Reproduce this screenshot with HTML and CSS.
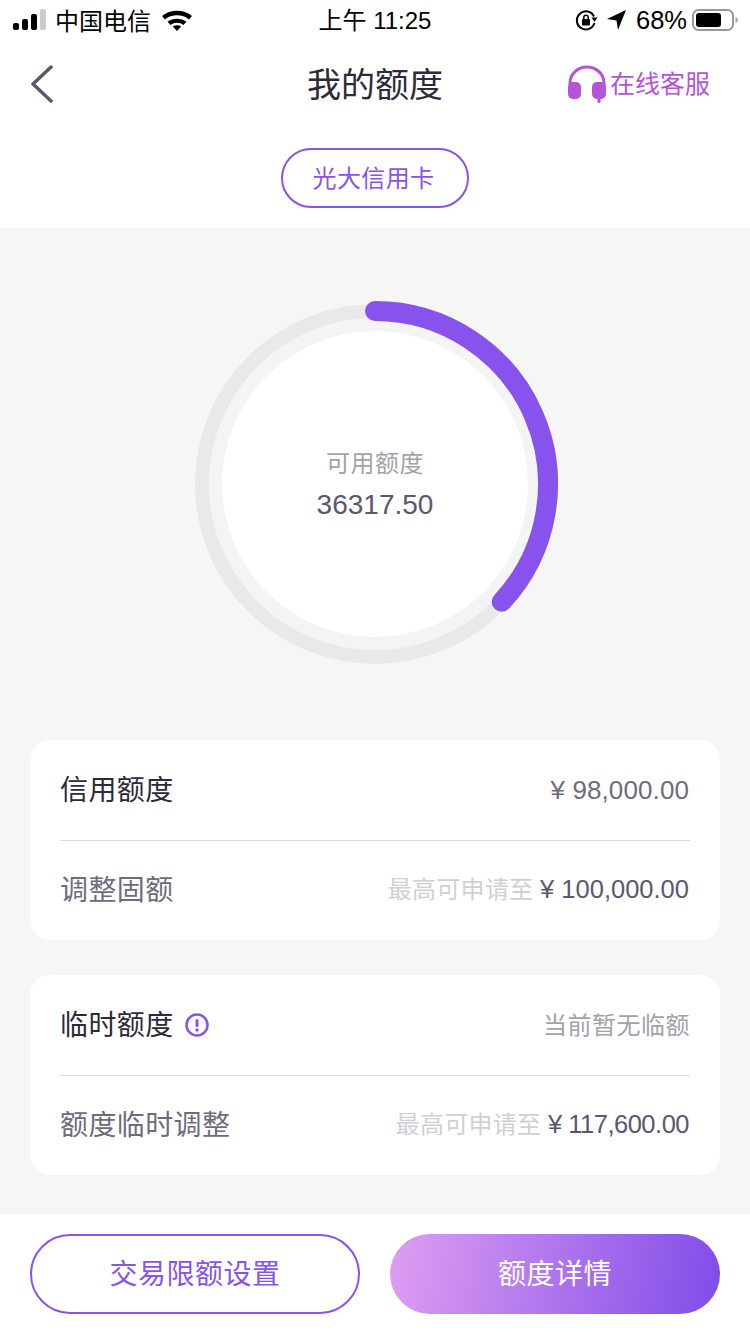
FILE: index.html
```html
<!DOCTYPE html>
<html lang="zh">
<head>
    <meta charset="UTF-8">
    <title>我的额度</title>
    <link rel="stylesheet" href="styles.css">
</head>
<body>
    <div class="top">
        <!-- 状态栏 -->
        <div class="status">
            <div class="status-left">
                <svg class="signal" width="34" height="22" viewBox="0 0 34 22">
                    <rect x="0" y="14" width="6" height="7" rx="2" fill="#000"/>
                    <rect x="9" y="10" width="6" height="11" rx="2" fill="#000"/>
                    <rect x="18" y="5" width="6" height="16" rx="2" fill="#000"/>
                    <rect x="27" y="0" width="6" height="21" rx="2" fill="#ccc"/>
                </svg>
                <span class="carrier">中国电信</span>
                <svg class="wifi" width="30" height="22" viewBox="0 0 30 22">
                    <path d="M0 7C8 0 22 0 30 7L27 10.400C20.500 4.800 9.500 4.800 3 10.400Z" fill="#000"/>
                    <path d="M5.500 12.800C11 8.600 19 8.600 24.500 12.800L21.500 16C17.500 13 12.500 13 8.500 16Z" fill="#000"/>
                    <path d="M10.800 17.500C13.200 15.800 16.800 15.800 19.200 17.500L15 22Z" fill="#000"/>
                </svg>
            </div>
            <div class="status-time">上午 11:25</div>
            <div class="status-right">
                <svg class="lock" width="24" height="24" viewBox="0 0 24 24">
                    <path d="M20 8.500A9 9 0 1 0 20.500 15" fill="none" stroke="#000" stroke-width="2"/>
                    <path d="M17.500 9.500L23.500 9.500L20.500 14Z" fill="#000"/>
                    <rect x="8" y="11" width="8" height="6.500" rx="1" fill="#000"/>
                    <path d="M9.800 11V9.500a2.200 2.200 0 0 1 4.400 0V11" fill="none" stroke="#000" stroke-width="1.500"/>
                </svg>
                <svg class="arrow" width="20" height="22" viewBox="0 0 20 22">
                    <path d="M19 1L11 21L9.500 11.500L0 10Z" fill="#000"/>
                </svg>
                <span class="battery-text">68%</span>
                <svg class="battery" width="47" height="24" viewBox="0 0 47 24">
                    <rect x="1" y="2" width="40" height="20" rx="5.500" fill="none" stroke="#999" stroke-width="2"/>
                    <rect x="4" y="5" width="25" height="14" rx="3" fill="#000"/>
                    <path d="M43.500 9v6c1.500-.5 2.500-1.500 2.500-3s-1-2.500-2.500-3Z" fill="#aaa"/>
                </svg>
            </div>
        </div>

        <!-- 导航 -->
        <div class="nav">
            <svg class="back" width="24" height="38" viewBox="0 0 24 38">
                <path d="M21 2L3 19L21 36" fill="none" stroke="#5d5670" stroke-width="3.500" stroke-linecap="round" stroke-linejoin="round"/>
            </svg>
            <h1 class="nav-title">我的额度</h1>
            <div class="service">
                <svg width="40" height="38" viewBox="0 0 40 38">
                    <path d="M3 20V18a17 16 0 0 1 34 0V20" fill="none" stroke="#b454d8" stroke-width="3"/>
                    <rect x="1" y="17" width="13" height="17" rx="5" fill="#b454d8"/>
                    <rect x="25" y="17" width="14" height="17" rx="5" fill="#b454d8"/>
                    <rect x="30.500" y="32" width="3" height="6" rx="1.500" fill="#b454d8"/>
                </svg>
                <span class="service-text">在线客服</span>
            </div>
        </div>

        <div class="pill-row">
            <div class="pill">光大信用卡</div>
        </div>
    </div>

    <div class="main">
        <!-- 额度圆环 -->
        <div class="gauge">
            <svg class="gauge-ring" width="370" height="370" viewBox="0 0 370 370">
                <circle cx="185" cy="185" r="173" fill="none" stroke="#e9e9e9" stroke-width="14"/>
                <circle cx="185" cy="185" r="166" fill="#f4f4f4"/>
                <circle cx="185" cy="185" r="153" fill="#fff"/>
                <path d="M185 12A173 173 0 0 1 311.700 302.800" fill="none" stroke="#8853ec" stroke-width="20" stroke-linecap="round"/>
            </svg>
            <div class="gauge-text">
                <div class="gauge-label">可用额度</div>
                <div class="gauge-value">36317.50</div>
            </div>
        </div>

        <div class="card">
            <div class="row">
                <span class="row-title">信用额度</span>
                <span class="money money-lg">¥ 98,000.00</span>
            </div>
            <div class="row">
                <span class="row-title muted">调整固额</span>
                <span class="limit"><span class="hint">最高可申请至</span> <span class="money dark">¥ 100,000.00</span></span>
            </div>
        </div>

        <div class="card">
            <div class="row">
                <span class="row-title">临时额度
                    <svg class="info" width="24" height="24" viewBox="0 0 24 24">
                        <circle cx="12" cy="12" r="10.500" fill="none" stroke="#8853ec" stroke-width="2.500"/>
                        <rect x="10.500" y="6" width="3" height="8" rx="1.500" fill="#8853ec"/>
                        <circle cx="12" cy="17" r="1.700" fill="#8853ec"/>
                    </svg>
                </span>
                <span class="none">当前暂无临额</span>
            </div>
            <div class="row">
                <span class="row-title muted">额度临时调整</span>
                <span class="limit"><span class="hint">最高可申请至</span> <span class="money dark tight">¥ 117,600.00</span></span>
            </div>
        </div>
    </div>

    <!-- 底部按钮 -->
    <div class="bottom">
        <div class="btn btn-outline">交易限额设置</div>
        <div class="btn btn-fill">额度详情</div>
    </div>
</body>
</html>
```

FILE: styles.css
```css
* {
    box-sizing: border-box;
}
html, body {
    margin: 0;
    padding: 0;
}
body {
    width: 750px;
    height: 1334px;
    overflow: hidden;
    background: #fff;
    font-family: "Noto Sans CJK SC", "Liberation Sans", sans-serif;
}
.top {
    height: 228px;
    background: #fff;
}
.status {
    height: 40px;
    padding: 0 11px 0 13px;
    display: flex;
    align-items: center;
    justify-content: space-between;
    position: relative;
    color: #000;
}
.status-left, .status-right {
    display: flex;
    align-items: center;
}
.carrier {
    margin-left: 8px;
    padding-bottom: 2px;
    font-size: 24px;
}
.wifi {
    margin-left: 11px;
}
.status-time {
    position: absolute;
    left: 0;
    right: 0;
    padding-bottom: 3px;
    text-align: center;
    font-size: 24px;
    font-family: "Liberation Sans", "Noto Sans CJK SC", sans-serif;
}
.arrow {
    margin-left: 9px;
}
.battery-text {
    margin-left: 9px;
    font-size: 25.500px;
    font-family: "Liberation Sans", sans-serif;
}
.battery {
    margin-left: 5px;
}
.nav {
    height: 88px;
    padding: 0 40px 0 30px;
    display: flex;
    align-items: center;
    justify-content: space-between;
    position: relative;
}
.nav-title {
    position: absolute;
    left: 0;
    right: 0;
    margin: 0;
    padding-bottom: 4px;
    text-align: center;
    font-size: 34px;
    font-weight: 400;
    color: #2d2a3a;
}
.service {
    display: flex;
    align-items: center;
    gap: 3px;
    color: #b454d8;
    font-size: 25px;
}
.service-text {
    padding-bottom: 4px;
}
.pill-row {
    padding-top: 20px;
    display: flex;
    justify-content: center;
}
.pill {
    width: 188px;
    height: 60px;
    margin-right: 1px;
    padding: 0 2px 4px 0;
    border: 2px solid #8853ec;
    border-radius: 30px;
    color: #8853ec;
    font-size: 24px;
    letter-spacing: .4px;
    display: flex;
    align-items: center;
    justify-content: center;
}
.main {
    height: 986px;
    padding: 0 30px;
    background: #f6f6f6;
}
.gauge {
    height: 512px;
    padding-top: 71px;
    position: relative;
    display: flex;
    justify-content: center;
}
.gauge-ring {
    display: block;
}
.gauge-text {
    position: absolute;
    left: 0;
    right: 0;
    top: 216px;
    text-align: center;
}
.gauge-label {
    font-size: 24px;
    line-height: 36px;
    letter-spacing: .5px;
    color: #a3a1ab;
}
.gauge-value {
    margin-top: 5px;
    font-size: 28px;
    line-height: 40px;
    color: #5d5670;
    font-family: "Liberation Sans", sans-serif;
}
.card {
    height: 200px;
    margin-bottom: 35px;
    padding: 0 30px;
    background: #fff;
    border-radius: 20px;
}
.row {
    height: 100px;
    display: flex;
    align-items: center;
    justify-content: space-between;
}
.row + .row {
    border-top: 1px solid #ddd;
}
.row-title {
    display: flex;
    align-items: center;
    gap: 11px;
    font-size: 28px;
    letter-spacing: .4px;
    color: #2d2a3a;
    padding-bottom: 4px;
}
.row-title.muted {
    color: #6f6b7d;
    padding-bottom: 6px;
}
.info {
    margin-top: 4px;
}
.limit {
    padding-bottom: 6px;
}
.money {
    margin-right: 1px;
    font-size: 25.500px;
    color: #6f6b7d;
    font-family: "Liberation Sans", sans-serif;
}
.money-lg {
    font-size: 26px;
    letter-spacing: .1px;
}
.money.dark {
    color: #5d5670;
}
.money.tight {
    letter-spacing: -.5px;
}
.hint {
    margin-right: 3px;
    font-size: 24px;
    letter-spacing: .3px;
    color: #d0d0d4;
}
.none {
    padding-bottom: 4px;
    font-size: 24px;
    letter-spacing: .5px;
    color: #a3a1ab;
}
.bottom {
    height: 120px;
    padding: 20px 30px;
    display: flex;
    justify-content: space-between;
    background: #fff;
}
.btn {
    width: 330px;
    height: 80px;
    padding-bottom: 4px;
    border-radius: 40px;
    font-size: 28px;
    letter-spacing: .5px;
    display: flex;
    align-items: center;
    justify-content: center;
}
.btn-outline {
    border: 2px solid #8853ec;
    color: #8853ec;
}
.btn-fill {
    color: #fff;
    background: linear-gradient(100deg, #df9ef2, #7f4ce8);
}
```
